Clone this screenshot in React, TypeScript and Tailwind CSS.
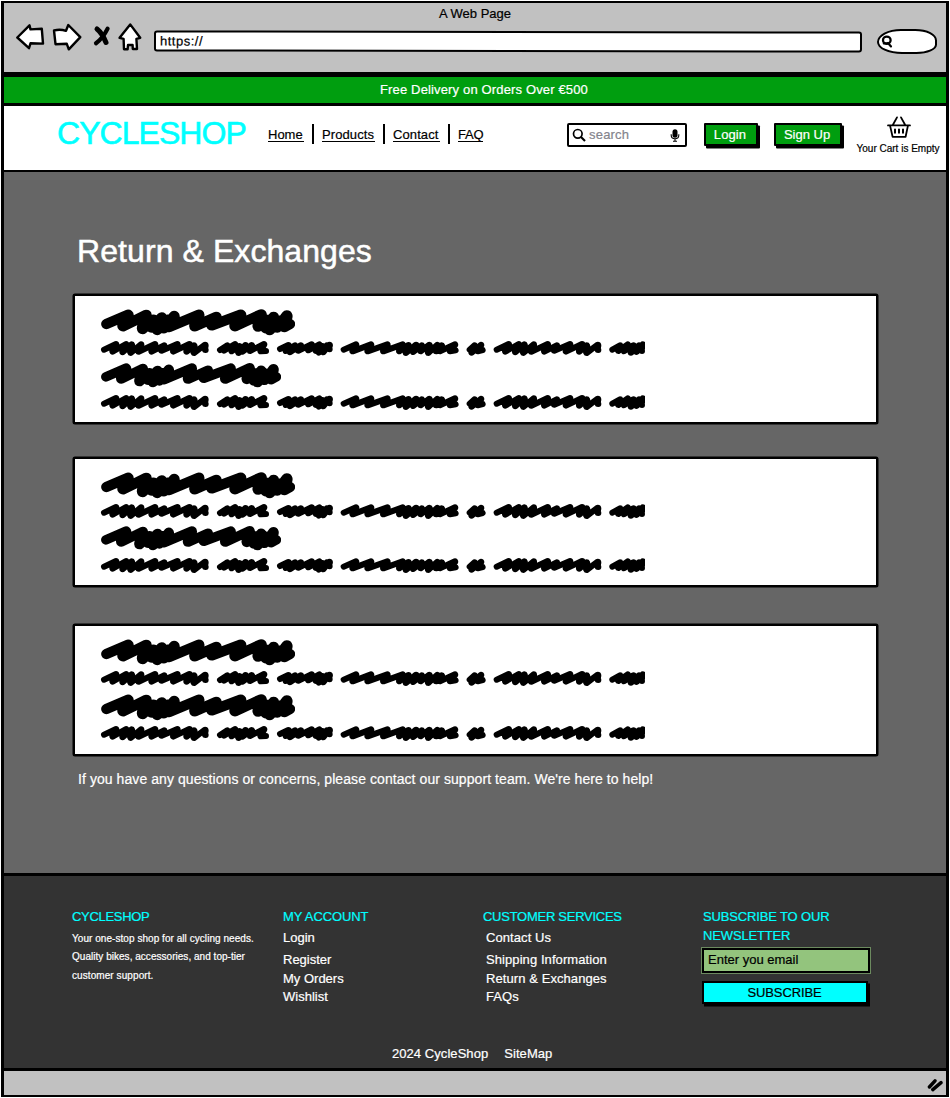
import React from "react";

type Stroke = { dx: number; dy: number; points: number[] };

const WORD_LONG = [
  42, 149, 78, 132, 68, 155, 108, 132, 98, 157, 125, 133, 122, 159, 153, 133, 146, 155, 195, 132, 185, 155, 222, 136,
  215, 152, 262, 132, 250, 155, 298, 132, 290, 155, 312, 136, 312, 159, 345, 134, 347, 150,
];

const SMALL_WORDS: Stroke[] = [
  { dx: -30, dy: -120, points: WORD_LONG },
  {
    dx: -30,
    dy: -120,
    points: [
      390, 150, 412, 136, 402, 152, 435, 132, 425, 154, 448, 138, 446, 159, 466, 135, 458, 155, 485, 135, 480, 153, 522,
      132, 512, 154, 528, 153,
    ],
  },
  {
    dx: -120,
    dy: -360,
    points: [
      660, 387, 685, 375, 678, 393, 705, 376, 690, 397, 722, 376, 715, 392, 755, 373, 745, 391, 778, 373, 768, 393, 785,
      377, 777, 398, 800, 376, 790, 397, 808, 374, 809, 388,
    ],
  },
  {
    dx: 600,
    dy: -15,
    points: [
      131, 44, 168, 28, 158, 49, 213, 28, 203, 49, 262, 28, 250, 49, 308, 28, 298, 49, 325, 30, 318, 54, 348, 29, 340,
      51, 365, 31, 362, 49, 388, 29, 385, 54, 412, 29, 408, 49, 425, 31, 420, 49, 465, 28, 450, 49, 467, 46,
    ],
  },
  { dx: 600, dy: -15, points: [509, 44, 523, 31, 515, 53, 543, 29, 533, 49, 548, 45] },
  { dx: 1148, dy: -120, points: WORD_LONG },
  {
    dx: 600,
    dy: -15,
    points: [937, 44, 960, 31, 955, 48, 983, 28, 972, 49, 1000, 31, 993, 53, 1017, 31, 1010, 51, 1028, 28, 1026, 48],
  },
];

const BIG_WORD: Stroke = {
  dx: -30,
  dy: -22,
  points: [
    49, 73, 114, 45, 99, 80, 168, 46, 158, 88, 190, 60, 186, 84, 215, 53, 202, 91, 232, 60, 222, 86, 252, 49, 238, 82,
    326, 45, 315, 80, 378, 52, 366, 77, 452, 45, 435, 80, 513, 44, 505, 81, 530, 60, 528, 86, 550, 52, 540, 91, 566,
    62, 562, 84, 590, 47, 584, 82, 600, 73,
  ],
};

function scribblePath({ dx, dy, points }: Stroke, bend: number) {
  let path = `M${points[0] + dx} ${points[1] + dy}`;
  for (let i = 2; i < points.length; i += 2) {
    const px = points[i - 2] + dx;
    const py = points[i - 1] + dy;
    const x = points[i] + dx;
    const y = points[i + 1] + dy;
    const rising = y < py;
    path += rising ? `L${x} ${y}` : `C${px + bend} ${py} ${x - bend} ${y} ${x} ${y}`;
  }
  return path;
}

function SmallScribble() {
  return (
    <svg
      className="block shrink-0"
      width="545"
      height="20"
      viewBox="0 0 1635 60"
      fill="none"
      stroke="#000"
      strokeWidth="18"
      strokeLinecap="round"
      strokeLinejoin="round"
    >
      {SMALL_WORDS.map((word, i) => (
        <path key={i} d={scribblePath(word, 6)} />
      ))}
    </svg>
  );
}

function BigScribble({ short = false }: { short?: boolean }) {
  return (
    <svg
      className="block shrink-0"
      width={short ? 181 : 195}
      height={short ? 28 : 30}
      viewBox="0 0 585 90"
      preserveAspectRatio="none"
      fill="none"
      stroke="#000"
      strokeWidth="31"
      strokeLinecap="round"
      strokeLinejoin="round"
    >
      <path d={scribblePath(BIG_WORD, 10)} />
    </svg>
  );
}

function PolicyCard({ className, tall = false }: { className: string; tall?: boolean }) {
  return (
    <section
      className={`flex flex-col w-[805px] rounded-[2px] border-2 border-black bg-white pl-[25px] pt-[11px] shadow-[0_0_0_0.5px_#000] ${className}`}
    >
      <BigScribble />
      <div className="mt-[3px]">
        <SmallScribble />
      </div>
      <div className={tall ? "mt-[2px]" : "mt-[1px]"}>
        <BigScribble short={!tall} />
      </div>
      <div className={tall ? "mt-[3px]" : "mt-[5px]"}>
        <SmallScribble />
      </div>
    </section>
  );
}

const sketch = {
  stroke: "#000",
  strokeWidth: 2.4,
  strokeLinejoin: "round" as const,
  strokeLinecap: "round" as const,
  fill: "#fff",
};

function BrowserBar() {
  return (
    <div className="h-[74px] border-b-[5px] border-black bg-[#c1c1c1]">
      <div className="h-[20px] text-center text-[13px] leading-[22px]">A Web Page</div>
      <div className="flex h-[30px] items-start pl-[12px]">
        <svg className="block shrink-0" width="130" height="30" viewBox="16 23 130 30">
          <path {...sketch} d="M17.3 37.5L29.5 25.3L30.5 29.4L41.8 28.8L43 43.6L30.5 43.3L29 48.2Z" />
          <path {...sketch} d="M54 30.5Q60 29 66 30.8L68.3 25L80.3 37.2L68.8 49.3L66.8 43.8L55.5 44.2Z" />
          <path d="M97 29Q102 33 106 42.4" stroke="#000" strokeWidth="5" strokeLinecap="round" fill="none" />
          <path d="M107.6 28.6Q103 38 96 43.2" stroke="#000" strokeWidth="4.2" strokeLinecap="round" fill="none" />
          <path
            {...sketch}
            d="M130.2 24.4L140.2 37.8L136.4 38.8L137 49L132.8 49L132.6 45L128 45L127.6 49.3L124 49.3L123.6 38.8L119.6 37.8Z"
          />
        </svg>
        <div className="ml-[8px] mt-[8px] flex h-[21px] w-[708px] rotate-[0.1deg] items-center rounded-[3px] border-2 border-black bg-white pl-[4px] text-[13px] tracking-[0.5px]">
          https://
        </div>
        <div className="ml-[15px] mt-[6px] flex h-[25px] w-[60px] items-center rounded-[42%_38%_36%_44%/55%_48%_40%_50%] border-2 border-black bg-white pl-[2px]">
          <svg width="12" height="13" viewBox="0 0 12 13" fill="none" stroke="#000" strokeLinecap="round">
            <ellipse cx="5.8" cy="5.2" rx="3.8" ry="3.6" strokeWidth="2.3" />
            <path d="M2.8 8.4L6 8.4M7 8L10 11.4" strokeWidth="2.2" />
          </svg>
        </div>
      </div>
    </div>
  );
}

function NavLink({ children, className }: { children: React.ReactNode; className: string }) {
  return (
    <a className={`h-[15px] whitespace-nowrap border-b border-black text-[13px] leading-[15px] ${className}`}>
      {children}
    </a>
  );
}

function Divider({ className }: { className: string }) {
  return <span className={`h-[20px] w-[2px] bg-black ${className}`} />;
}

function Header() {
  return (
    <header className="flex h-[66px] items-start border-b-2 border-black bg-white">
      <div className="ml-[53px] mt-[9px] w-[211px] whitespace-nowrap text-[32px] leading-[36px] tracking-[-0.95px] text-[#00ffff] [-webkit-text-stroke:0.6px_#00ffff]">
        CYCLESHOP
      </div>
      <nav className="mt-[18px] flex w-[299px] items-center">
        <NavLink className="w-[36px]">Home</NavLink>
        <Divider className="ml-[8px]" />
        <NavLink className="ml-[8px] w-[53px] tracking-[0.1px]">Products</NavLink>
        <Divider className="ml-[8px]" />
        <NavLink className="ml-[8px] w-[47px] tracking-[0.1px]">Contact</NavLink>
        <Divider className="ml-[8px]" />
        <NavLink className="ml-[8px] w-[25px] tracking-[-0.2px]">FAQ</NavLink>
      </nav>
      <div className="mt-[17px] flex h-[24px] w-[120px] items-center rounded-[2px] border-2 border-black bg-white">
        <svg className="ml-[3px]" width="14" height="14" viewBox="0 0 14 14" fill="none" stroke="#000" strokeWidth="1.7">
          <circle cx="5.8" cy="5.8" r="4.3" />
          <path d="M9 9L13 13" strokeWidth="2.1" />
        </svg>
        <span className="ml-[3px] w-[81px] text-[13px] leading-[20px] tracking-[0.2px] text-[#84848c]">search</span>
        <svg width="10" height="13" viewBox="0 0 10 13">
          <rect x="2.5" y="0.3" width="5" height="8.4" rx="2.5" />
          <path d="M1.2 5.2V6.3Q1.2 9.8 5 9.8Q8.8 9.8 8.8 6.3V5.2M5 9.6V12M3 12.2H7" fill="none" stroke="#000" strokeWidth="1.1" />
        </svg>
      </div>
      <button className="ml-[17px] mt-[17px] h-[23px] w-[54px] rounded-[1px] border-2 border-black bg-[#009e0f] pr-[2px] text-center text-[13px] leading-[20px] tracking-[0.1px] text-white shadow-[2px_2.5px_0_0_#000]">
        Login
      </button>
      <button className="ml-[16px] mt-[17px] h-[23px] w-[68px] rounded-[1px] border-2 border-black bg-[#009e0f] pr-[2px] text-center text-[13px] leading-[20px] text-white shadow-[2px_2.5px_0_0_#000]">
        Sign Up
      </button>
      <div className="ml-[12px] mt-[10px] flex w-[88px] flex-col items-center">
        <svg className="ml-[2px]" width="24" height="23" viewBox="0 0 24 23" fill="none" stroke="#000" strokeWidth="1.8" strokeLinecap="round">
          <path d="M1 9.4H23M3 9.4L5.6 20.8H18.6L21 9.4M5.8 9L10 1.4M18.2 9L14 1.4" strokeLinejoin="round" />
          <path d="M8 13.6V16.8M12 13.6V16.8M16 13.6V16.8" strokeWidth="2" />
        </svg>
        <div className="mt-[2px] whitespace-nowrap text-[10px] leading-[16px]">Your Cart is Empty</div>
      </div>
    </header>
  );
}

function FooterHeading({ children, className = "" }: { children: React.ReactNode; className?: string }) {
  return <h2 className={`whitespace-nowrap text-[13px] leading-[19px] text-[#00ffff] ${className}`}>{children}</h2>;
}

function FooterLinks({ items, className = "" }: { items: string[]; className?: string }) {
  return (
    <ul className={`mt-px grid grid-rows-[22px_22px_16px_20px] items-center whitespace-nowrap text-[13px] ${className}`}>
      {items.map((item) => (
        <li key={item} className="leading-[16px]">
          {item}
        </li>
      ))}
    </ul>
  );
}

function Footer() {
  return (
    <footer className="flex h-[198px] flex-col border-y-[3px] border-black bg-[#333333] text-white">
      <div className="grid grid-cols-[211px_200px_220px_168px] pl-[68px] pt-[31px]">
        <div>
          <FooterHeading className="tracking-[-0.3px]">CYCLESHOP</FooterHeading>
          <p className="mt-[4px] whitespace-nowrap text-[10px] leading-[18.4px]">
            <span className="tracking-[0.05px]">Your one-stop shop for all cycling needs.</span>
            <br />
            <span className="tracking-[0.03px]">Quality bikes, accessories, and top-tier</span>
            <br />
            <span className="tracking-[0.08px]">customer support.</span>
          </p>
        </div>
        <div>
          <FooterHeading className="tracking-[-0.1px]">MY ACCOUNT</FooterHeading>
          <FooterLinks items={["Login", "Register", "My Orders", "Wishlist"]} />
        </div>
        <div>
          <FooterHeading className="tracking-[-0.27px]">CUSTOMER SERVICES</FooterHeading>
          <FooterLinks
            className="pl-[3px] tracking-[0.08px]"
            items={["Contact Us", "Shipping Information", "Return & Exchanges", "FAQs"]}
          />
        </div>
        <div>
          <FooterHeading className="tracking-[-0.15px]">
            SUBSCRIBE TO OUR
            <br />
            NEWSLETTER
          </FooterHeading>
          <div className="ml-[-1px] mt-[3px] h-[25px] w-[168px] border-2 border-black bg-[#93c47d] pl-[4px] text-[13px] leading-[20px] text-black outline outline-[0.5px] outline-[#93c47d]/60">
            Enter you email
          </div>
          <button className="ml-[-1px] mt-[8px] block h-[23px] w-[166px] border-2 border-black bg-[#00ffff] pr-[1px] text-center text-[13px] leading-[20px] tracking-[-0.1px] text-black shadow-[2px_2.5px_0_0_#000]">
            SUBSCRIBE
          </button>
        </div>
      </div>
      <div className="mt-auto flex gap-[16px] pb-[6px] pl-[388px] text-[13px] leading-[17px] tracking-[0.06px]">
        <span>2024 CycleShop</span>
        <span>SiteMap</span>
      </div>
    </footer>
  );
}

export default function App() {
  return (
    <div className="h-[1098px] w-[950px] overflow-hidden bg-white pl-[1px] pt-[1px] font-['Liberation_Sans',sans-serif] text-black [-webkit-text-stroke:0.2px]">
      <div className="flex h-[1096px] w-[948px] flex-col border-x-[3px] border-y-2 border-black">
        <BrowserBar />
        <div className="h-[29px] border-b-[3px] border-black bg-[#009e0f] pl-[18px] text-center text-[13px] leading-[26px] tracking-[0.15px] text-white">
          Free Delivery on Orders Over €500
        </div>
        <Header />
        <main className="flex h-[701px] flex-col bg-[#666666] pl-[69px] text-white">
          <h1 className="mt-[61px] pl-[4px] text-[32px] leading-[37px] tracking-[0.08px] [-webkit-text-stroke:0.5px_#fff]">
            Return &amp; Exchanges
          </h1>
          <PolicyCard className="mt-[24px] h-[130px]" />
          <PolicyCard className="mt-[33px] h-[130px]" />
          <PolicyCard className="mt-[37px] h-[132px]" tall />
          <p className="mt-[14px] pl-[5px] text-[14px] leading-[18px] tracking-[0.07px]">
            If you have any questions or concerns, please contact our support team. We're here to help!
          </p>
        </main>
        <Footer />
        <div className="flex flex-1 items-end justify-end bg-[#c1c1c1] pb-[3px] pr-[2px]">
          <svg width="17" height="14" viewBox="0 0 17 14" stroke="#000" strokeWidth="3.4" strokeLinecap="round">
            <path d="M2.4 9L8 2.8M5.8 11.6L14 4.6" />
          </svg>
        </div>
      </div>
    </div>
  );
}
